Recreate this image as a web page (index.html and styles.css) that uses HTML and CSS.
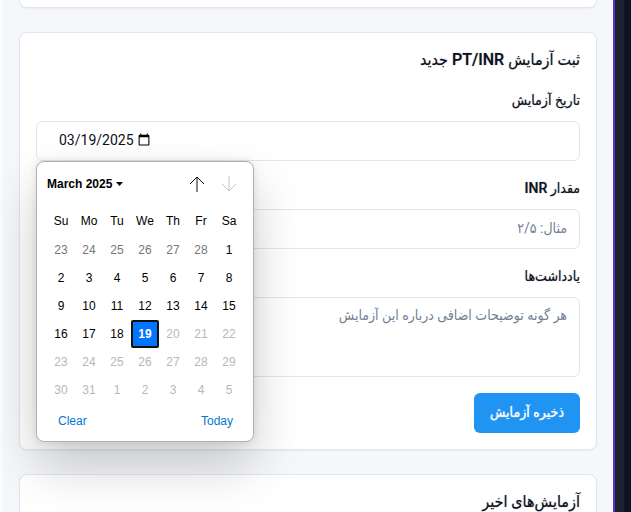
FILE: index.html
```html
<!DOCTYPE html>
<html lang="fa" dir="rtl">
<head>
<meta charset="utf-8">
<meta name="viewport" content="width=device-width, initial-scale=1">
<title>PT/INR</title>
<link rel="stylesheet" href="styles.css">
</head>
<body>
<aside class="sidebar"></aside>
<main class="content">
  <section class="card card-end"></section>
  <section class="card">
    <h2 class="title">ثبت آزمایش PT/INR جدید</h2>
    <form class="form">
      <div class="field">
        <label class="label" for="test-date">تاریخ آزمایش</label>
        <div class="date-wrap">
          <input class="input date" dir="ltr" lang="en-US" id="test-date" type="date" value="2025-03-19" max="2025-03-19">
          <div class="picker" dir="ltr" lang="en">
            <div class="picker-head">
              <button class="month" type="button">March 2025<svg width="7" height="4" viewBox="0 0 7 4"><path d="M0 0h7L3.5 4z"/></svg></button>
              <button class="arrow" type="button" aria-label="Previous month"><svg width="16" height="16" viewBox="0 0 16 16"><path d="M8 16V1M1 8l7-7 7 7"/></svg></button>
              <button class="arrow off" type="button" aria-label="Next month"><svg width="16" height="16" viewBox="0 0 16 16"><path d="M8 0v15M1 8l7 7 7-7"/></svg></button>
            </div>
            <table class="days">
              <thead><tr><th>Su</th><th>Mo</th><th>Tu</th><th>We</th><th>Th</th><th>Fr</th><th>Sa</th></tr></thead>
              <tbody>
                <tr><td class="prev">23</td><td class="prev">24</td><td class="prev">25</td><td class="prev">26</td><td class="prev">27</td><td class="prev">28</td><td>1</td></tr>
                <tr><td>2</td><td>3</td><td>4</td><td>5</td><td>6</td><td>7</td><td>8</td></tr>
                <tr><td>9</td><td>10</td><td>11</td><td>12</td><td>13</td><td>14</td><td>15</td></tr>
                <tr><td>16</td><td>17</td><td>18</td><td class="selected">19</td><td class="off">20</td><td class="off">21</td><td class="off">22</td></tr>
                <tr><td class="off">23</td><td class="off">24</td><td class="off">25</td><td class="off">26</td><td class="off">27</td><td class="off">28</td><td class="off">29</td></tr>
                <tr><td class="off">30</td><td class="off">31</td><td class="off">1</td><td class="off">2</td><td class="off">3</td><td class="off">4</td><td class="off">5</td></tr>
              </tbody>
            </table>
            <div class="picker-foot">
              <button class="action" type="button">Clear</button>
              <button class="action" type="button">Today</button>
            </div>
          </div>
        </div>
      </div>
      <div class="field">
        <label class="label" for="inr">مقدار INR</label>
        <input class="input" id="inr" type="text" placeholder="مثال: ۲/۵">
      </div>
      <div class="field">
        <label class="label" for="notes">یادداشت‌ها</label>
        <textarea class="input notes" id="notes" placeholder="هر گونه توضیحات اضافی درباره این آزمایش"></textarea>
      </div>
      <button class="submit" type="submit">ذخیره آزمایش</button>
    </form>
  </section>
  <section class="card card-start">
    <h2 class="title">آزمایش‌های اخیر</h2>
  </section>
</main>
</body>
</html>
```
FILE: styles.css
```css
* { box-sizing: border-box; }

body {
  margin: 0;
  display: flex;
  height: 100vh;
  overflow: hidden;
  background: #f5f7fb;
  color: #0c1222;
  font: 14px/24px Roboto, "DejaVu Sans Condensed", "DejaVu Sans", sans-serif;
}

button, input, textarea { font: inherit; }
button { padding: 0; border: 0; background: none; }

.sidebar {
  flex: 0 0 18px;
  background: linear-gradient(to left, #0c1424 7px, #1b2131 7px 16px, #4f36c4 16px);
}

.content {
  flex: 1;
  min-width: 0;
  display: flex;
  flex-direction: column;
  gap: 24px;
  padding: 0 16px;
  border-left: 3px solid #fbfcfe;
}

.card {
  flex-shrink: 0;
  padding: 16px;
  border: 1px solid #e1e7ef;
  border-radius: 8px;
  background: #fff;
  box-shadow: 0 1px 2px rgba(0, 0, 0, 0.05);
}

.card-end {
  padding: 0 0 7px;
  border-top: 0;
  border-radius: 0 0 8px 8px;
}

.card-start {
  flex: 1 0 auto;
  padding-bottom: 0;
  border-bottom: 0;
  border-radius: 8px 8px 0 0;
}

.title, .label {
  font-weight: 500;
  text-shadow: 0 0 1px rgba(12, 18, 34, 0.5);
}

.title {
  margin: 0;
  font-size: 16px;
  line-height: 22px;
}

.form {
  display: flex;
  flex-direction: column;
  gap: 16px;
  margin-top: 18px;
}

.field {
  display: flex;
  flex-direction: column;
  gap: 10px;
}

.label { line-height: 22px; }

.input {
  display: block;
  width: 100%;
  height: 40px;
  padding: 7px 12px 9px;
  border: 1px solid #e1e7ef;
  border-radius: 6px;
  outline: 0;
  background: #fff;
  color: #0c1222;
  line-height: 20px;
}

.input::placeholder { color: #718096; opacity: 1; }
.notes { height: 80px; resize: none; }

.date-wrap { position: relative; }
.date { padding-left: 22px; }
.date::-webkit-datetime-edit { flex: 0 0 auto; }
.date::-webkit-datetime-edit-month-field,
.date::-webkit-datetime-edit-day-field,
.date::-webkit-datetime-edit-year-field { padding: 0; }
.date::-webkit-calendar-picker-indicator { margin-inline-start: -14px; }

.submit {
  align-self: flex-start;
  height: 40px;
  padding: 0 16px 2px;
  border-radius: 6px;
  background: #2094f3;
  color: #f8fafc;
  font-weight: 500;
  text-shadow: 0 0 1px #f8fafc;
}

.picker {
  position: absolute;
  z-index: 1;
  top: 100%;
  left: 0;
  width: 218px;
  padding: 8px 8px 6px 10px;
  border: 1px solid #b0b0b0;
  border-radius: 8px;
  background: #fff;
  box-shadow: 0 0 8px rgba(0, 0, 0, 0.1), 0 24px 50px rgba(0, 0, 0, 0.2);
  color: #000;
  font: 12px/28px "Liberation Sans", sans-serif;
}

.picker-head {
  display: flex;
  align-items: center;
  height: 28px;
}

.month {
  display: flex;
  flex: 1;
  align-items: center;
  gap: 4px;
  color: #000;
  font-weight: 700;
}

.arrow {
  display: grid;
  place-items: center;
  width: 32px;
  height: 28px;
}

.arrow svg {
  fill: none;
  stroke: #101010;
}

.arrow.off svg { stroke: #c4c4c4; }

.days {
  width: 196px;
  margin-top: 8px;
  border-spacing: 0;
  table-layout: fixed;
}

.days th, .days td {
  height: 28px;
  padding: 0;
  text-align: center;
}

.days th { height: 30px; font-weight: 400; }
.days .prev { color: #767676; }
.days .off { color: #b8b8b8; }

.days .selected {
  border: 2px solid #101010;
  border-radius: 2px;
  background: #0075ff;
  color: #fff;
  font-weight: 700;
  line-height: 24px;
}

.picker-foot {
  display: flex;
  justify-content: space-between;
  padding: 3px 12px 0 11px;
}

.action { color: #0078d4; }
```
